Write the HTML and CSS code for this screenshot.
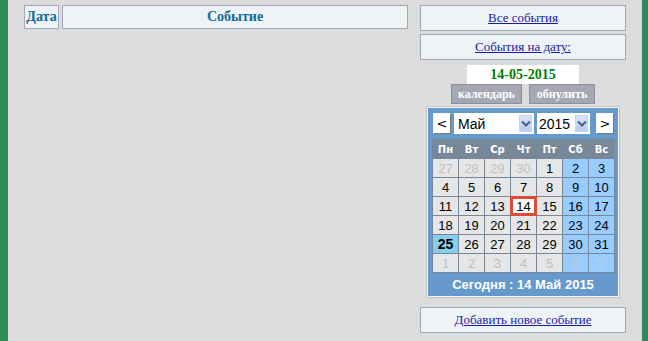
FILE: index.html
```html
<!DOCTYPE html>
<html lang="ru">
<head>
  <meta charset="UTF-8">
  <title>События</title>
  <link rel="stylesheet" href="styles.css">
</head>
<body>
  <div class="page">
    <div class="events">
      <div class="head-row">
        <div class="head-cell cell-date">Дата</div>
        <div class="head-cell cell-event">Событие</div>
      </div>
    </div>

    <div class="sidebar">
      <div class="link-box"><a href="#">Все события</a></div>
      <div class="link-box"><a href="#">События на дату:</a></div>
      <div class="date-value">14-05-2015</div>
      <div class="date-buttons">
        <button class="grey-btn">календарь</button>
        <button class="grey-btn">обнулить</button>
      </div>

      <div class="calendar">
        <div class="cal-nav">
          <button class="nav-btn">&lt;</button>
          <div class="fake-select month-select">
            <span>Май</span>
            <span class="sel-arrow"><svg width="10" height="7" viewBox="0 0 10 7"><path d="M1 1.5 L5 5.5 L9 1.5" fill="none" stroke="#4d6185" stroke-width="2"/></svg></span>
          </div>
          <div class="fake-select year-select">
            <span>2015</span>
            <span class="sel-arrow"><svg width="10" height="7" viewBox="0 0 10 7"><path d="M1 1.5 L5 5.5 L9 1.5" fill="none" stroke="#4d6185" stroke-width="2"/></svg></span>
          </div>
          <button class="nav-btn">&gt;</button>
        </div>

        <div class="cal-grid">
          <div class="dow">Пн</div><div class="dow">Вт</div><div class="dow">Ср</div><div class="dow">Чт</div><div class="dow">Пт</div><div class="dow">Сб</div><div class="dow">Вс</div>

          <div class="day other">27</div><div class="day other">28</div><div class="day other">29</div><div class="day other">30</div><div class="day">1</div><div class="day weekend">2</div><div class="day weekend">3</div>

          <div class="day">4</div><div class="day">5</div><div class="day">6</div><div class="day">7</div><div class="day">8</div><div class="day weekend">9</div><div class="day weekend">10</div>

          <div class="day">11</div><div class="day">12</div><div class="day">13</div><div class="day selected">14</div><div class="day">15</div><div class="day weekend">16</div><div class="day weekend">17</div>

          <div class="day">18</div><div class="day">19</div><div class="day">20</div><div class="day">21</div><div class="day">22</div><div class="day weekend">23</div><div class="day weekend">24</div>

          <div class="day today">25</div><div class="day">26</div><div class="day">27</div><div class="day">28</div><div class="day">29</div><div class="day weekend">30</div><div class="day weekend">31</div>

          <div class="day other">1</div><div class="day other">2</div><div class="day other">3</div><div class="day other">4</div><div class="day other">5</div><div class="day other weekend">6</div><div class="day other weekend">7</div>
        </div>

        <div class="cal-footer">Сегодня : 14 Май 2015</div>
      </div>

      <div class="link-box add-box"><a href="#">Добавить новое событие</a></div>
    </div>
  </div>
</body>
</html>
```

FILE: styles.css
```css
html, body {
    margin: 0;
    padding: 0;
    height: 100%;
}
body {
    background: #dcdcdc;
    font-family: "Liberation Serif", "Times New Roman", serif;
}
.page {
    box-sizing: border-box;
    height: 341px;
    border-left: 8px solid #2e8b57;
    border-right: 6px solid #2e8b57;
    padding: 5px 16px 0 16px;
    display: flex;
    gap: 12px;
}
.events {
    flex: 1;
}
.head-row {
    display: flex;
    gap: 3px;
}
.head-cell {
    box-sizing: border-box;
    height: 24px;
    background: #eef3f5;
    border: 1px solid #a3a5b8;
    color: #0e6b9b;
    font-weight: bold;
    font-size: 14px;
    display: flex;
    align-items: center;
    justify-content: center;
}
.cell-date {
    width: 35px;
}
.cell-event {
    flex: 1;
}
.sidebar {
    width: 206px;
    display: flex;
    flex-direction: column;
    align-items: center;
}
.link-box {
    box-sizing: border-box;
    width: 100%;
    height: 26px;
    margin-bottom: 3px;
    background: #eef3f5;
    border: 1px solid #a3a5b8;
    display: flex;
    align-items: center;
    justify-content: center;
    font-size: 13px;
}
.link-box a {
    color: #1a1aa8;
}
.date-value {
    margin-top: 2px;
    width: 112px;
    height: 19px;
    background: #fff;
    color: #008000;
    font-weight: bold;
    font-size: 14px;
    text-align: center;
    line-height: 19px;
}
.date-buttons {
    display: flex;
    gap: 7px;
}
.grey-btn {
    box-sizing: border-box;
    height: 20px;
    padding: 0 6px;
    background: #a5a8b3;
    border: 1px solid #8d909c;
    color: #fff;
    font-family: "Liberation Serif", "Times New Roman", serif;
    font-weight: bold;
    font-size: 12px;
}
.grey-btn:first-child {
    width: 71px;
}
.grey-btn:last-child {
    width: 66px;
}

/* calendar */
.calendar {
    box-sizing: border-box;
    margin-top: 3px;
    width: 192px;
    height: 190px;
    background: #6699cc;
    border: 1px solid #f2f2f2;
    box-shadow: 0 0 0 1px #c4c4c4;
    padding: 5px 4px 0 4px;
    font-family: "Liberation Sans", Arial, sans-serif;
}
.cal-nav {
    display: flex;
    align-items: center;
    height: 21px;
    margin-left: 1px;
}
.nav-btn {
    box-sizing: border-box;
    width: 18px;
    height: 21px;
    padding: 0;
    background: #fff;
    border: 1px solid;
    border-color: #f4f4f4 #7a7a7a #7a7a7a #f4f4f4;
    font-family: "DejaVu Sans", Verdana, sans-serif;
    font-size: 13px;
    color: #000;
}
.fake-select {
    box-sizing: border-box;
    height: 21px;
    background: #fff;
    display: flex;
    align-items: center;
    justify-content: space-between;
    padding: 0 2px 0 4px;
    font-size: 14px;
}
.month-select {
    width: 80px;
    margin-left: 3px;
}
.year-select {
    width: 53px;
    margin: 0 6px 0 3px;
    padding-left: 2px;
}
.sel-arrow {
    width: 13px;
    height: 17px;
    background: linear-gradient(#dce6fb, #b6c9f3);
    border: 1px solid #c6d3ef;
    box-sizing: border-box;
    display: flex;
    align-items: center;
    justify-content: center;
}
.cal-grid {
    margin-top: 5px;
    display: grid;
    grid-template-columns: repeat(7, 25px);
    grid-auto-rows: 18px;
    gap: 1px;
    padding: 1px;
    background: #778899;
    width: max-content;
}
.dow {
    color: #fff;
    font-family: "DejaVu Sans", Verdana, sans-serif;
    font-weight: bold;
    font-size: 10px;
    display: flex;
    align-items: center;
    justify-content: center;
}
.day {
    background: #e6e6e6;
    color: #000;
    font-size: 13px;
    display: flex;
    align-items: center;
    justify-content: center;
}
.day.weekend {
    background: #99ccff;
}
.day.other {
    color: #c0c0c0;
}
.day.today {
    background: #87ceeb;
    font-weight: bold;
    font-size: 14px;
}
.day.selected {
    background: #fff;
    box-shadow: 0 0 0 1px #dd4b39, inset 0 0 0 2px #dd4b39;
}
.cal-footer {
    color: #fff;
    font-weight: bold;
    font-size: 13px;
    text-align: center;
    padding-top: 4px;
}
.add-box {
    margin-top: 10px;
}
```
